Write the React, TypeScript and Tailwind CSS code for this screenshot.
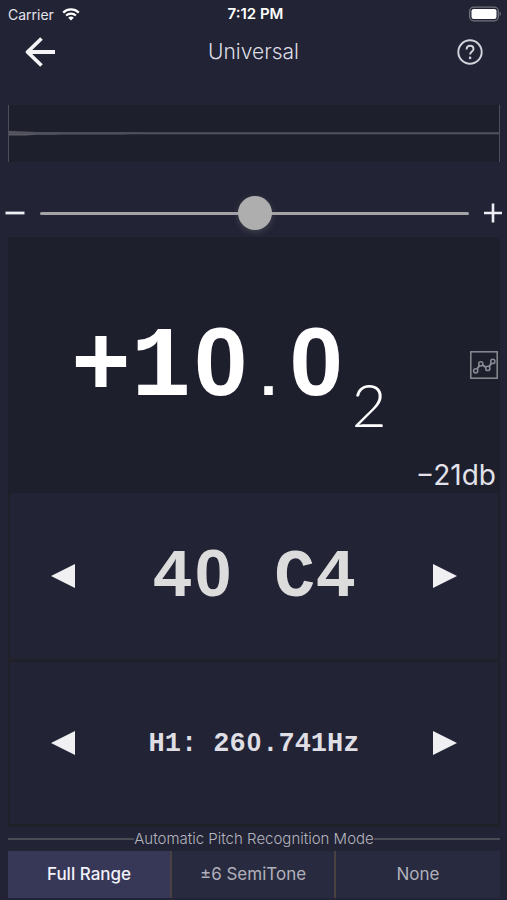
import { useState } from "react";

const MODES = ["Full Range", "±6 SemiTone", "None"];

function StatusBar() {
  return (
    <div className="grid h-7 grid-cols-3 items-center pl-2 pr-1 text-[#e4e4ec]">
      <span className="flex items-center gap-2">
        <span className="text-[14px]">Carrier</span>
        <svg width="18" height="13" viewBox="0 0 18 13" fill="none" aria-hidden="true">
          <path d="M1.2 4.6a11.2 11.2 0 0 1 15.6 0" stroke="#fff" strokeWidth="2.2" />
          <path d="M4.1 7.6a7 7 0 0 1 9.8 0" stroke="#fff" strokeWidth="2.1" />
          <path d="M6.2 9.8a4 4 0 0 1 5.6 0L9 12.6z" fill="#fff" />
        </svg>
      </span>
      <span className="text-center text-[15px] font-semibold text-white">7:12 PM</span>
      <svg className="justify-self-end" width="34" height="16" viewBox="0 0 34 16" aria-hidden="true">
        <rect x="0.7" y="1.2" width="28.6" height="13.6" rx="4" fill="none" stroke="#74747f" strokeWidth="1.3" />
        <rect x="2.5" y="3" width="25" height="10" rx="2.2" fill="#fff" />
        <path d="M30.6 5.8c1.6.5 1.6 3.9 0 4.4z" fill="#74747f" />
      </svg>
    </div>
  );
}

function NavBar() {
  return (
    <header className="grid h-12 grid-cols-[auto_1fr_auto] items-center px-6">
      <button type="button" aria-label="Back" className="w-8">
        <svg width="32" height="30" viewBox="0 0 32 30" fill="none" stroke="#f4f4f6" strokeWidth="3.8">
          <path d="M17.5 1.5 3.5 15l14 13.5M3.5 15H31" strokeLinejoin="round" />
        </svg>
      </button>
      <h1 className="text-center text-[21px] font-light text-[#dcdce4]">Universal</h1>
      <button type="button" aria-label="Help" className="flex w-8 justify-end">
        <svg width="26" height="26" viewBox="0 0 26 26" fill="none" stroke="#d3d3dc" strokeWidth="1.9">
          <circle cx="13" cy="13" r="11.7" />
          <path d="M9.6 10.4c0-2.3 1.4-3.7 3.5-3.7s3.4 1.3 3.4 3.2c0 2.6-3.4 2.8-3.4 5.7" />
          <circle cx="13.1" cy="18.9" r="1.3" fill="#d3d3dc" stroke="none" />
        </svg>
      </button>
    </header>
  );
}

function Waveform() {
  return (
    <div className="ml-2 mr-[7px] mt-[29px] h-[57px] border-x border-[#4d4d58] bg-[#1e1f2d]">
      <svg className="block h-full w-full" viewBox="0 0 490 57" preserveAspectRatio="none" aria-hidden="true">
        <path d="M0 26l14 .6 20 .6h20l4 .3H130l6 .3H490v1.4H120l-6 .3H52l-5 .3H27l-10 .6H0z" fill="#5b5b66" />
        <path d="M0 28.2H490" stroke="#50505c" strokeWidth="1.8" />
      </svg>
    </div>
  );
}

function GainSlider() {
  const [gain, setGain] = useState(50);
  return (
    <div className="mt-[33px] flex h-9 items-center justify-between px-1">
      <button type="button" aria-label="Decrease" onClick={() => setGain(Math.max(0, gain - 1))}>
        <svg width="22" height="22" viewBox="0 0 22 22" stroke="#eeeef4" strokeWidth="2.8">
          <path d="M1.5 11h19" />
        </svg>
      </button>
      <input
        type="range"
        aria-label="Gain"
        min={0}
        max={100}
        value={gain}
        onChange={(e) => setGain(Number(e.target.value))}
        className="mx-3.5 h-9 min-w-0 flex-1 appearance-none bg-transparent [&::-webkit-slider-runnable-track]:h-[3px] [&::-webkit-slider-runnable-track]:rounded-full [&::-webkit-slider-runnable-track]:bg-[#a3a3a8] [&::-webkit-slider-thumb]:-mt-4 [&::-webkit-slider-thumb]:size-[34px] [&::-webkit-slider-thumb]:appearance-none [&::-webkit-slider-thumb]:rounded-full [&::-webkit-slider-thumb]:bg-[#aeaeae] [&::-webkit-slider-thumb]:shadow-[0_2px_6px_rgba(150,150,150,0.3)]"
      />
      <button type="button" aria-label="Increase" onClick={() => setGain(Math.min(100, gain + 1))}>
        <svg width="20" height="22" viewBox="0 0 20 22" stroke="#eeeef4" strokeWidth="2.6">
          <path d="M1 11h18M10 1.5v19" />
        </svg>
      </button>
    </div>
  );
}

function Readout() {
  return (
    <section className="flex flex-col bg-[#1e1f2d] pb-1">
      <div className="mt-[60px] grid min-h-0 flex-1 grid-cols-[1fr_auto] items-start">
        <p className="pl-[63px] font-['Liberation_Mono',monospace] text-[100px] leading-[130px] font-bold whitespace-nowrap text-white">
          +1
          <span className="px-[3px] font-['Liberation_Sans',sans-serif] text-[96px]">0</span>
          <span className="text-[60px]">.</span>
          <span className="px-[3px] font-['Liberation_Sans',sans-serif] text-[96px]">0</span>
          <sub className="bottom-0 pl-1.5 align-[-32px] font-['Lato',sans-serif] text-[60px] leading-none font-light">2</sub>
        </p>
        <button type="button" aria-label="Show chart" className="mt-[54px] mr-[2px]">
          <svg width="28" height="28" viewBox="0 0 28 28" fill="none" stroke="#8b8b93" strokeWidth="1.5">
            <rect x="0.8" y="0.8" width="26.4" height="26.4" />
            <circle cx="5.7" cy="19.8" r="2.1" />
            <circle cx="10.8" cy="12.8" r="2.1" />
            <circle cx="17.8" cy="17.4" r="2.1" />
            <circle cx="22.8" cy="10.4" r="2.1" />
            <path d="M7 18l2.5-3.4M12.6 14l3.4 2.3M19 15.7l2.5-3.6" strokeWidth="2" />
          </svg>
        </button>
      </div>
      <p className="pr-1 text-right text-[28px] leading-7 text-[#e2e2ea]">−21db</p>
    </section>
  );
}

interface StepperProps {
  label: string;
  children: React.ReactNode;
}

function Stepper({ label, children }: StepperProps) {
  return (
    <section className="flex items-center justify-between border-2 border-t-0 border-b-3 border-[#1f2028] px-10">
      <button type="button" aria-label={`Previous ${label}`}>
        <svg width="26" height="24" viewBox="0 0 26 24" fill="#f0f0f2">
          <path d="M25 0v24L1 12z" />
        </svg>
      </button>
      {children}
      <button type="button" aria-label={`Next ${label}`}>
        <svg width="26" height="24" viewBox="0 0 26 24" fill="#f0f0f2">
          <path d="M1 0v24l24-12z" />
        </svg>
      </button>
    </section>
  );
}

function ModePicker() {
  const [mode, setMode] = useState(MODES[0]);
  return (
    <div role="radiogroup" aria-labelledby="mode-title" className="ml-2 mr-[7px] mb-0.5">
      <div className="flex h-6 items-center">
        <span className="h-0.5 flex-1 bg-[#4b4b55]" />
        <h2 id="mode-title" className="text-[15px] leading-5 font-light text-[#b4b4be]">
          Automatic Pitch Recognition Mode
        </h2>
        <span className="h-0.5 flex-1 bg-[#4b4b55]" />
      </div>
      <div className="grid h-[47px] grid-cols-3 divide-x-2 divide-[#4a4240] bg-[#282a3f]">
        {MODES.map((m) => (
          <label
            key={m}
            className="flex cursor-pointer items-center justify-center text-[17px] text-[#b0b0bb] has-checked:bg-[#373757] has-checked:font-medium has-checked:text-[#f2f2fa]"
          >
            <input
              type="radio"
              name="mode"
              className="sr-only"
              checked={mode === m}
              onChange={() => setMode(m)}
            />
            {m}
          </label>
        ))}
      </div>
    </div>
  );
}

export default function App() {
  return (
    <main className="flex min-h-screen flex-col bg-[#222334] font-['Inter',sans-serif]">
      <StatusBar />
      <NavBar />
      <Waveform />
      <GainSlider />
      {/* readout takes about two fifths of the height, the steppers share the rest */}
      <div className="mt-1.5 ml-2 mr-[7px] grid flex-1 grid-rows-[minmax(0,256fr)_minmax(0,169fr)_minmax(0,165fr)]">
        <Readout />
        <Stepper label="note">
          <p className="font-['Liberation_Mono',monospace] text-[68px] leading-none font-bold text-[#dcdcdc]">
            4<span className="px-0.5 font-['Liberation_Sans',sans-serif] text-[66px]">0</span> C4
          </p>
        </Stepper>
        <Stepper label="harmonic">
          <p className="font-['Liberation_Mono',monospace] text-[27px] leading-none font-bold text-[#dedee4]">
            H1: 26<span className="px-px font-['Liberation_Sans',sans-serif] text-[26px]">0</span>.741Hz
          </p>
        </Stepper>
      </div>
      <ModePicker />
    </main>
  );
}
